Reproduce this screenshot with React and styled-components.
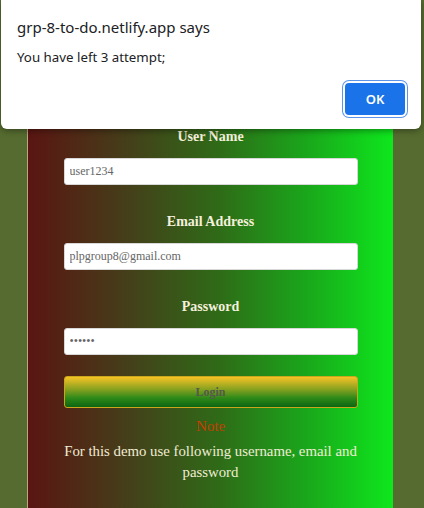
import React from 'react'
import styled, { createGlobalStyle } from 'styled-components'

const GlobalStyle = createGlobalStyle`
  html, body {
    margin: 0;
    padding: 0;
    background: #556b2f;
    overflow: hidden;
  }
  body {
    font-family: 'Liberation Serif', 'Times New Roman', serif;
  }
`

export default function App() {
  return (
    <>
      <GlobalStyle />
      <Page>
        <Card>
          <Field>
            <Label>User Name</Label>
            <Input type="text" defaultValue="user1234" />
          </Field>
          <Field>
            <Label>Email Address</Label>
            <Input type="email" defaultValue="plpgroup8@gmail.com" />
          </Field>
          <Field>
            <Label>Password</Label>
            <Input type="password" defaultValue="123456" />
          </Field>
          <LoginButton type="button">Login</LoginButton>
          <Note>Note</Note>
          <Hint>For this demo use following username, email and password</Hint>
        </Card>
      </Page>
      <Dialog>
        <DialogTitle>grp-8-to-do.netlify.app says</DialogTitle>
        <DialogMessage>You have left 3 attempt;</DialogMessage>
        <DialogActions>
          <OkButton type="button">OK</OkButton>
        </DialogActions>
      </Dialog>
    </>
  )
}

const Page = styled.div`
  display: flex;
  height: 508px;
  padding-left: 27px;
`

const Card = styled.div`
  width: 366px;
  box-sizing: border-box;
  border-left: 1px solid #b9a77e;
  background: linear-gradient(to right, #5a1512 0%, #44401a 28%, #2f6a17 52%, #1aa61b 76%, #0ee71d 100%);
  display: flex;
  flex-direction: column;
  align-items: center;
  padding-top: 128px;
`

const Field = styled.div`
  display: flex;
  flex-direction: column;
  align-items: center;

  & + & {
    margin-top: 28px;
  }
`

const Label = styled.label`
  color: #f4f0dc;
  font-weight: bold;
  font-size: 14px;
  line-height: 18px;
  margin-bottom: 12px;
`

const Input = styled.input`
  width: 294px;
  height: 27px;
  box-sizing: border-box;
  border: 1px solid #d8d8d8;
  border-radius: 3px;
  background: #fff;
  padding: 0 5px;
  font-family: 'Liberation Serif', 'Times New Roman', serif;
  font-size: 12px;
  color: #666;
  outline: none;
`

const LoginButton = styled.button`
  width: 294px;
  height: 32px;
  box-sizing: border-box;
  border: 1px solid #c9a61c;
  border-radius: 3px;
  background: linear-gradient(to bottom, #f6c326 0%, #7c9e1f 45%, #2d8a19 70%, #0d6512 100%);
  font-family: 'Liberation Serif', 'Times New Roman', serif;
  font-weight: bold;
  font-size: 12px;
  color: #55594a;
  margin-top: 21px;
`

const Note = styled.div`
  color: #c53d00;
  font-size: 15px;
  line-height: 18px;
  margin-top: 9px;
`

const Hint = styled.p`
  margin: 6px 0 0;
  width: 300px;
  text-align: center;
  color: #f1ecd4;
  font-size: 14.8px;
  line-height: 21px;
`

const Dialog = styled.div`
  position: absolute;
  top: 0;
  left: 1px;
  width: 420px;
  height: 129px;
  box-sizing: border-box;
  background: #fff;
  border-radius: 0 0 6px 6px;
  box-shadow: 0 2px 6px rgba(0, 0, 0, 0.35);
  padding: 17px 16px 0;
  font-family: 'Noto Sans', 'Open Sans', sans-serif;
  display: flex;
  flex-direction: column;
`

const DialogTitle = styled.div`
  font-size: 15px;
  line-height: 20px;
  color: #202124;
`

const DialogMessage = styled.div`
  margin-top: 11px;
  font-size: 13.3px;
  line-height: 18px;
  color: #202124;
`

const DialogActions = styled.div`
  display: flex;
  justify-content: flex-end;
  margin-top: 17px;
`

const OkButton = styled.button`
  width: 60px;
  height: 32px;
  border: none;
  border-radius: 4px;
  background: #1a73e8;
  color: #fff;
  font-family: 'Noto Sans', 'Open Sans', sans-serif;
  font-size: 13px;
  font-weight: 600;
  box-shadow: 0 0 0 2px #fff, 0 0 0 3px #5b95ea;
`
